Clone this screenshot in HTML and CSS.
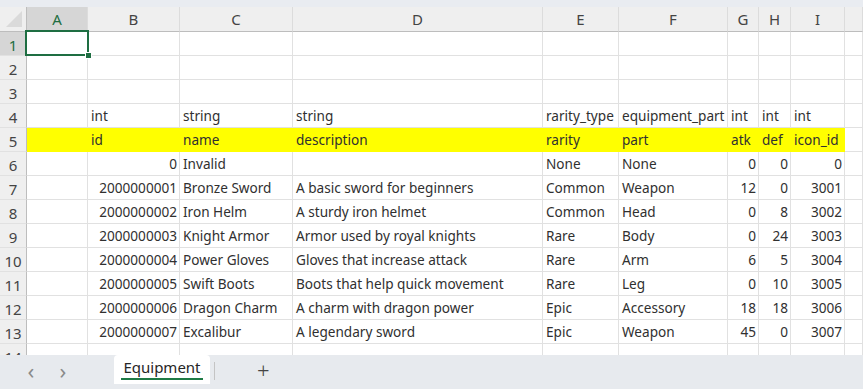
FILE: index.html
```html
<!DOCTYPE html>
<html lang="ja">
<head>
  <meta charset="UTF-8">
  <title>Equipment</title>
  <link rel="stylesheet" href="styles.css">
</head>
<body>
  <div class="app">
    <div class="topstrip"></div>

    <div class="sheet">
      <!-- column headers -->
      <div class="row head">
        <span class="corner"><i class="tri"></i></span>
        <span class="active">A</span><span>B</span><span>C</span><span>D</span><span>E</span>
        <span>F</span><span>G</span><span>H</span><span>I</span><span></span>
      </div>

      <div class="row"><span class="rh active">1</span><span></span><span></span><span></span><span></span><span></span><span></span><span></span><span></span><span></span><span></span></div>
      <div class="row"><span class="rh">2</span><span></span><span></span><span></span><span></span><span></span><span></span><span></span><span></span><span></span><span></span></div>
      <div class="row"><span class="rh">3</span><span></span><span></span><span></span><span></span><span></span><span></span><span></span><span></span><span></span><span></span></div>
      <div class="row"><span class="rh">4</span><span></span><span>int</span><span>string</span><span>string</span><span>rarity_type</span><span>equipment_part</span><span>int</span><span>int</span><span>int</span><span></span></div>
      <div class="row key"><span class="rh">5</span><span></span><span>id</span><span>name</span><span>description</span><span>rarity</span><span>part</span><span>atk</span><span>def</span><span>icon_id</span><span class="plain"></span></div>
      <div class="row"><span class="rh">6</span><span></span><span class="num">0</span><span>Invalid</span><span></span><span>None</span><span>None</span><span class="num">0</span><span class="num">0</span><span class="num">0</span><span></span></div>
      <div class="row"><span class="rh">7</span><span></span><span class="num">2000000001</span><span>Bronze Sword</span><span>A basic sword for beginners</span><span>Common</span><span>Weapon</span><span class="num">12</span><span class="num">0</span><span class="num">3001</span><span></span></div>
      <div class="row"><span class="rh">8</span><span></span><span class="num">2000000002</span><span>Iron Helm</span><span>A sturdy iron helmet</span><span>Common</span><span>Head</span><span class="num">0</span><span class="num">8</span><span class="num">3002</span><span></span></div>
      <div class="row"><span class="rh">9</span><span></span><span class="num">2000000003</span><span>Knight Armor</span><span>Armor used by royal knights</span><span>Rare</span><span>Body</span><span class="num">0</span><span class="num">24</span><span class="num">3003</span><span></span></div>
      <div class="row"><span class="rh">10</span><span></span><span class="num">2000000004</span><span>Power Gloves</span><span>Gloves that increase attack</span><span>Rare</span><span>Arm</span><span class="num">6</span><span class="num">5</span><span class="num">3004</span><span></span></div>
      <div class="row"><span class="rh">11</span><span></span><span class="num">2000000005</span><span>Swift Boots</span><span>Boots that help quick movement</span><span>Rare</span><span>Leg</span><span class="num">0</span><span class="num">10</span><span class="num">3005</span><span></span></div>
      <div class="row"><span class="rh">12</span><span></span><span class="num">2000000006</span><span>Dragon Charm</span><span>A charm with dragon power</span><span>Epic</span><span>Accessory</span><span class="num">18</span><span class="num">18</span><span class="num">3006</span><span></span></div>
      <div class="row"><span class="rh">13</span><span></span><span class="num">2000000007</span><span>Excalibur</span><span>A legendary sword</span><span>Epic</span><span>Weapon</span><span class="num">45</span><span class="num">0</span><span class="num">3007</span><span></span></div>
      <div class="row"><span class="rh">14</span><span></span><span></span><span></span><span></span><span></span><span></span><span></span><span></span><span></span><span></span></div>

      <!-- A1 selection -->
      <div class="selection"><i class="handle"></i></div>
    </div>

    <div class="tabbar">
      <span class="nav">&#x2039;</span>
      <span class="nav">&#x203A;</span>
      <div class="tab"><span class="tab-label">Equipment</span></div>
      <span class="sep"></span>
      <span class="add">+</span>
    </div>
  </div>
</body>
</html>
```

FILE: styles.css
```css
* {
  box-sizing: border-box;
}
body {
  margin: 0;
  font-family: "Noto Sans", "Noto Sans CJK JP", sans-serif;
  font-size: 13.6px;
  color: #303030;
  background: #fff;
}
.app {
  width: 863px;
  height: 389px;
  display: flex;
  flex-direction: column;
  overflow: hidden;
}
.topstrip {
  height: 7px;
  background: #e9ecf1;
  flex: none;
}
.sheet {
  position: relative;
  flex: 1;
  overflow: hidden;
}
.row {
  display: grid;
  grid-template-columns: 27px 61px 92px 113px 250px 76px 109px 31px 32px 54px 1fr;
  height: 24px;
}
.row > span {
  border-right: 1px solid #e1e1e1;
  border-bottom: 1px solid #e1e1e1;
  padding: 0 2px 2px 3px;
  white-space: nowrap;
  overflow: hidden;
  display: flex;
  align-items: flex-end;
  line-height: 18px;
}
.row > span.num {
  justify-content: flex-end;
}
.row .rh {
  background: #efefef;
  color: #444;
  border-right: 1px solid #bdbdbd;
  justify-content: center;
  padding: 0 0 1px;
  font-size: 15px;
}
.row .rh.active {
  background: #d6d6d6;
  color: #1e6e42;
}

/* column header */
.row.head {
  height: 25px;
}
.row.head > span {
  background: #efefef;
  color: #444;
  justify-content: center;
  align-items: center;
  font-size: 15px;
  border-right-color: #dcdcdc;
  border-bottom: 1px solid #bdbdbd;
  padding: 0;
}
.row.head > span.active {
  background: #d6d6d6;
  color: #1e6e42;
}
.row.head .corner {
  border-right-color: #bdbdbd;
  position: relative;
}
.tri {
  position: absolute;
  right: 4px;
  bottom: 4px;
  width: 0;
  height: 0;
  border-left: 16px solid transparent;
  border-bottom: 16px solid #dadada;
}

/* header key row */
.row.key > span {
  background: #ffff00;
  border-color: #ffff00;
}
.row.key > span.rh {
  background: #efefef;
  border-right-color: #bdbdbd;
  border-bottom-color: #e1e1e1;
}
.row.key > span.plain {
  background: #fff;
  border-color: #e1e1e1;
}

/* active cell */
.selection {
  position: absolute;
  left: 25px;
  top: 23px;
  width: 64px;
  height: 26px;
  border: 2px solid #1e6e42;
}
.handle {
  position: absolute;
  right: -5px;
  bottom: -5px;
  width: 7px;
  height: 7px;
  background: #1e6e42;
  border: 1px solid #fff;
}

/* sheet tabs */
.tabbar {
  flex: none;
  height: 34px;
  background: #e7eaee;
  display: flex;
  align-items: flex-start;
  padding-left: 15px;
}
.nav {
  width: 32px;
  height: 30px;
  line-height: 30px;
  font-size: 22px;
  color: #8a8a8a;
  text-align: center;
}
.nav + .nav {
  margin-right: 35px;
}
.tab {
  width: 96px;
  height: 29px;
  background: #fff;
  border-radius: 4px 4px 0 0;
  display: flex;
  justify-content: center;
  align-items: flex-start;
  padding-top: 3px;
}
.tab-label {
  font-size: 15px;
  color: #262626;
  line-height: 19px;
  padding: 0 2px 1px;
  border-bottom: 2px solid #1e7a45;
}
.sep {
  width: 1px;
  height: 18px;
  margin: 7px 0 0 4px;
  background: #c4c4c4;
}
.add {
  margin-left: 42px;
  font-size: 22px;
  line-height: 30px;
  color: #444;
  font-weight: 300;
}
```
